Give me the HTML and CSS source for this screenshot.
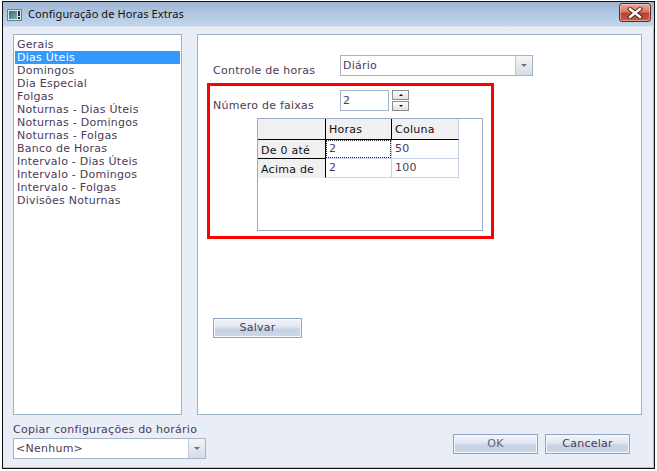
FILE: index.html
```html
<!DOCTYPE html>
<html lang="pt">
<head>
<meta charset="utf-8">
<title>Configuração de Horas Extras</title>
<link rel="stylesheet" href="styles.css">
</head>
<body>
<div class="window">
  <div class="titlebar">
    <svg class="appicon" width="15" height="12" viewBox="0 0 15 12">
      <defs>
        <linearGradient id="ig" x1="0" y1="0" x2="1" y2="1">
          <stop offset="0" stop-color="#2f6f78"/>
          <stop offset="1" stop-color="#7fb0a8"/>
        </linearGradient>
      </defs>
      <rect x="0.5" y="0.5" width="14" height="11" fill="#dfe6ee" stroke="#6a7c92"/>
      <rect x="2" y="2" width="8" height="8" fill="url(#ig)"/>
      <rect x="11" y="2" width="2" height="5" fill="#1d2a38"/>
      <rect x="11" y="8" width="2" height="2" fill="#1d2a38"/>
    </svg>
    <span class="title">Configuração de Horas Extras</span>
    <span class="close">
      <svg width="18" height="12" viewBox="0 0 18 12">
        <path d="M4 2 L14 10 M14 2 L4 10" stroke="#4a1c18" stroke-width="4.2" stroke-linecap="square"/>
        <path d="M4 2 L14 10 M14 2 L4 10" stroke="#ffffff" stroke-width="2.4" stroke-linecap="square"/>
      </svg>
    </span>
  </div>
  <div class="client">
    <div class="main">
      <ul class="list">
        <li>Gerais</li>
        <li class="sel">Dias Úteis</li>
        <li>Domingos</li>
        <li>Dia Especial</li>
        <li>Folgas</li>
        <li>Noturnas - Dias Úteis</li>
        <li>Noturnas - Domingos</li>
        <li>Noturnas - Folgas</li>
        <li>Banco de Horas</li>
        <li>Intervalo - Dias Úteis</li>
        <li>Intervalo - Domingos</li>
        <li>Intervalo - Folgas</li>
        <li>Divisões Noturnas</li>
      </ul>
      <div class="panel">
        <div class="row ctl">
          <span class="lbl">Controle de horas</span>
          <div class="combo wide"><span class="ctext">Diário</span><span class="ddbtn"><span class="tri"></span></span></div>
        </div>
        <div class="redbox">
          <div class="row spinrow">
            <span class="lbl">Número de faixas</span>
            <div class="spinedit">2</div>
            <div class="spinbtns"><span class="sb up"><span class="utri"></span></span><span class="sb down"><span class="dtri"></span></span></div>
          </div>
          <div class="grid">
            <table class="gt">
              <tr class="hdr">
                <td class="corner"></td>
                <td class="hc">Horas</td>
                <td class="hc last">Coluna</td>
              </tr>
              <tr>
                <td class="rh">De 0 até</td>
                <td class="dc focus"><span class="focusbox">2</span></td>
                <td class="dc">50</td>
              </tr>
              <tr>
                <td class="rh lastrow">Acima de</td>
                <td class="dc">2</td>
                <td class="dc">100</td>
              </tr>
            </table>
          </div>
        </div>
        <div class="btn salvar">Salvar</div>
      </div>
    </div>
    <div class="footer">
      <div class="copy">
        <div class="copylbl">Copiar configurações do horário</div>
        <div class="combo small"><span class="ctext">&lt;Nenhum&gt;</span><span class="ddbtn"><span class="tri"></span></span></div>
      </div>
      <div class="actions">
        <div class="btn ok">OK</div>
        <div class="btn">Cancelar</div>
      </div>
    </div>
  </div>
</div>
</body>
</html>
```
FILE: styles.css
```css
* { box-sizing: border-box; }
html, body { margin: 0; padding: 0; background: #ffffff; }
body {
  font-family: "DejaVu Sans", Verdana, sans-serif;
  font-size: 11px;
  letter-spacing: 0.25px;
  color: #4b3b59;
  width: 657px;
  height: 471px;
  overflow: hidden;
}
.window {
  margin: 1px 0 0 2px;
  width: 653px;
  height: 468px;
  border: 1px solid #111;
  display: flex;
  flex-direction: column;
}
.titlebar {
  height: 25px;
  flex: none;
  display: flex;
  align-items: center;
  padding-left: 4px;
  background: linear-gradient(#9db4d2 0%, #b0c6e0 45%, #c2d5ec 100%);
  border-bottom: 1px solid #d6e2f0;
}
.appicon { flex: none; margin-top: 1px; }
.title {
  font-family: "Noto Sans", "Open Sans", sans-serif;
  font-size: 11px;
  letter-spacing: 0.1px;
  color: #111;
  margin-left: 6px;
  flex: 1;
  padding-bottom: 1px;
}
.close {
  width: 32px;
  height: 19px;
  margin-right: 3px;
  margin-top: -3px;
  border: 1px solid #5b2a26;
  border-radius: 3px;
  background: linear-gradient(#e8aa9a 0%, #d47a68 45%, #c0402e 55%, #c85a44 100%);
  display: flex;
  align-items: center;
  justify-content: center;
  box-shadow: inset 0 0 0 1px rgba(255,220,210,0.5);
}
.client {
  flex: 1;
  background: #e9eef6;
  padding: 7px 0 0 10px;
  border-right: 1px solid #8ccbea;
  border-bottom: 1px solid #8ccbea;
}
.main { display: flex; }
.list {
  list-style: none;
  margin: 0;
  padding: 3px 1px 0 1px;
  width: 169px;
  height: 381px;
  background: #fff;
  border: 1px solid #9eafc8;
}
.list li {
  height: 13px;
  line-height: 13px;
  padding-left: 2px;
  white-space: nowrap;
}
.list li.sel { background: #3399ff; color: #fff; }
.panel {
  margin-left: 15px;
  width: 445px;
  height: 381px;
  background: #fff;
  border: 1px solid #9eafc8;
  padding: 20px 0 0 9px;
}
.row { display: flex; align-items: flex-end; }
.lbl { width: 127px; line-height: 13px; white-space: nowrap; flex: none; }
.ctl { margin-left: 6px; }
.ctl .lbl { margin-bottom: -1px; }
.spinrow .lbl { margin-bottom: -1px; }
.combo {
  height: 21px;
  display: flex;
  border: 1px solid #a4b3ca;
  background: #fff;
}
.combo .ctext { flex: 1; padding-left: 2px; line-height: 19px; white-space: nowrap; }
.combo.wide { width: 193px; }
.combo.small { width: 193px; }
.ddbtn {
  width: 17px;
  border-left: 1px solid #bdc8d8;
  background: linear-gradient(#f4f6f9, #d5dce7);
  display: flex;
  align-items: center;
  justify-content: center;
}
.tri {
  width: 0; height: 0;
  border-left: 3px solid transparent;
  border-right: 3px solid transparent;
  border-top: 3px solid #6b7380;
}
.redbox {
  margin-top: 7px;
  width: 287px;
  height: 156px;
  border: 3px solid #ff0000;
  padding: 4px 0 0 3px;
}
.spinedit {
  width: 49px;
  height: 21px;
  border: 1px solid #a4b3ca;
  padding-left: 2px;
  line-height: 19px;
  flex: none;
}
.spinbtns {
  margin-left: 3px;
  width: 17px;
  height: 21px;
  display: flex;
  flex-direction: column;
  gap: 1px;
}
.sb {
  height: 10px;
  border: 1px solid #8c8c8c;
  background: linear-gradient(#fdfdfd, #e2e2e2);
  display: flex;
  align-items: center;
  justify-content: center;
}
.utri { width:0; height:0; border-left:2px solid transparent; border-right:2px solid transparent; border-bottom:2px solid #111; }
.dtri { width:0; height:0; border-left:2px solid transparent; border-right:2px solid transparent; border-top:2px solid #111; }
.grid {
  margin-top: 7px;
  margin-left: 44px;
  width: 226px;
  height: 113px;
  border: 1px solid #9aaac2;
  background: #fff;
}
.gt { border-collapse: separate; border-spacing: 0; table-layout: fixed; }
.gt td { padding: 0 0 0 3px; white-space: nowrap; box-sizing: border-box; }
.hdr td { height: 21px; background: #f0f0f0; color: #111; border-bottom: 1px solid #000; border-right: 1px solid #000; vertical-align: middle; padding-top: 1px; }
.hdr td.last { border-right: 1px solid #c5d2e6; }
.corner { width: 68px; }
.hc { width: 66px; }
.hc.last { width: 67px; }
.rh { height: 19px; background: #f0f0f0; color: #111; border-right: 1px solid #000; border-bottom: 1px solid #000; vertical-align: bottom; padding-bottom: 0 !important; line-height: 14px; }
.rh.lastrow { border-bottom: 1px solid #f0f0f0; }
.dc { height: 19px; border-right: 1px solid #c5d2e6; border-bottom: 1px solid #c5d2e6; vertical-align: top; line-height: 16px; padding-top: 1px !important; }
.dc.focus { padding: 0 !important; }
.focusbox { display: block; height: 18px; width: 65px; border: 1px dotted #222; padding-left: 2px; line-height: 15px; }
.btn {
  height: 20px;
  border: 1px solid #8ea4c2;
  background: linear-gradient(#f2f5fa 0%, #e3e9f2 40%, #c5d2e3 60%, #cdd8e7 100%);
  box-shadow: inset 0 0 0 1px #f4f7fb;
  text-align: center;
  line-height: 18px;
  color: #4b3b59;
}
.salvar { width: 89px; margin: 79px 0 0 6px; }
.footer { display: flex; }
.copy { width: 193px; }
.copylbl { margin-top: 8px; line-height: 13px; white-space: nowrap; }
.copy .combo { margin-top: 2px; }
.actions { display: flex; gap: 7px; margin-left: 247px; margin-top: 19px; }
.actions .btn { width: 85px; }
.ok { color: #6a6478; }
```
